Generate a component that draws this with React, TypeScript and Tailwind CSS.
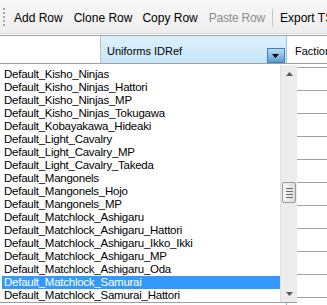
import React from "react";

const items = [
  "Default_Kisho_Ninjas",
  "Default_Kisho_Ninjas_Hattori",
  "Default_Kisho_Ninjas_MP",
  "Default_Kisho_Ninjas_Tokugawa",
  "Default_Kobayakawa_Hideaki",
  "Default_Light_Cavalry",
  "Default_Light_Cavalry_MP",
  "Default_Light_Cavalry_Takeda",
  "Default_Mangonels",
  "Default_Mangonels_Hojo",
  "Default_Mangonels_MP",
  "Default_Matchlock_Ashigaru",
  "Default_Matchlock_Ashigaru_Hattori",
  "Default_Matchlock_Ashigaru_Ikko_Ikki",
  "Default_Matchlock_Ashigaru_MP",
  "Default_Matchlock_Ashigaru_Oda",
  "Default_Matchlock_Samurai",
  "Default_Matchlock_Samurai_Hattori",
];

export default function App() {
  return (
    <div
      className="relative w-[327px] h-[305px] overflow-hidden bg-white text-[12px] text-black"
      style={{ fontFamily: '"Liberation Sans", Arial, sans-serif' }}
    >
      {/* Toolbar */}
      <div className="h-[34px] bg-gradient-to-b from-[#f7f7f7] to-[#eeeeee] border-b border-[#d8d8d8] flex items-center whitespace-nowrap overflow-hidden">
        <div className="ml-[3px] mr-[8px] flex flex-col gap-[2px] shrink-0">
          {[0, 1, 2, 3, 4].map((i) => (
            <div key={i} className="w-[2px] h-[2px] bg-[#a8a8a8]" />
          ))}
        </div>
        <span className="ml-[1px] mt-[2px] shrink-0">Add Row</span>
        <span className="ml-[11px] mt-[2px] shrink-0">Clone Row</span>
        <span className="ml-[10px] mt-[2px] shrink-0">Copy Row</span>
        <span className="ml-[11px] mt-[2px] shrink-0 text-[#8d8d8d] tracking-[-0.2px]">Paste Row</span>
        <div className="ml-[7px] w-px h-[18px] bg-[#c8c8c8] mt-[2px] shrink-0" />
        <span className="ml-[7px] mt-[2px] shrink-0">Export TS</span>
      </div>

      {/* Header row */}
      <div className="mt-[1px] h-[29px] flex border-t border-b border-[#a0a0a0] text-[11px] whitespace-nowrap">
        <div className="w-[101px] shrink-0 bg-white border-r border-[#c0c0c0]" />
        <div className="w-[186px] shrink-0 bg-gradient-to-b from-[#def1fc] to-[#c5e6f8] border-r border-[#9fc6de] relative flex items-center">
          <span className="ml-[6px] mt-[3px]">Uniforms IDRef</span>
          <div className="absolute left-[166px] top-[12px] w-[18px] h-[15px] border border-[#3c7fb1] bg-gradient-to-b from-[#b9dcf3] to-[#5aa0d3] flex items-center justify-center">
            <svg width="8" height="4" viewBox="0 0 8 4">
              <path d="M0 0h7l-3.5 4z" fill="#000" />
            </svg>
          </div>
        </div>
        <div className="flex-1 bg-white flex items-center overflow-hidden">
          <span className="ml-[8px] mt-[3px]">Faction</span>
        </div>
      </div>

      {/* Grid body */}
      <div className="relative">
        <div className="h-[4px] border-b border-[#a0a0a0]" />
        {Array.from({ length: 11 }).map((_, i) => (
          <div key={i} className="h-[23px] border-b border-[#a0a0a0] flex">
            <div className="w-[287px] shrink-0 border-r border-[#a0a0a0]" />
          </div>
        ))}
      </div>

      {/* Dropdown list overlay */}
      <div className="absolute left-0 top-[65px] w-[297px] h-[238px] bg-white border-b border-[#a0a0a0] flex">
        <div className="flex-1 pt-[3px] pl-[2px] overflow-hidden text-[11.5px] tracking-[-0.25px]">
          {items.map((it) => {
            const sel = it === "Default_Matchlock_Samurai";
            return (
              <div
                key={it}
                className={
                  "h-[13px] leading-[13px] pl-[2px] whitespace-nowrap " +
                  (sel ? "bg-[#3399ff] text-white" : "text-[#000]")
                }
              >
                {it}
              </div>
            );
          })}
        </div>
        {/* Scrollbar */}
        <div className="w-[17px] shrink-0 bg-[#ececec] border-l border-[#e0e0e0] flex flex-col items-center">
          <div className="h-[17px] w-full flex items-center justify-center">
            <svg width="7" height="4" viewBox="0 0 7 4">
              <path d="M0 4h7L3.5 0z" fill="#555" />
            </svg>
          </div>
          <div className="h-[100px]" />
          <div className="w-[14px] h-[21px] border border-[#9a9a9a] rounded-[2px] bg-gradient-to-r from-[#f6f6f6] to-[#dcdcdc] flex flex-col items-center justify-center gap-[2px]">
            {[0, 1, 2, 3].map((i) => (
              <div key={i} className="w-[7px] h-px bg-[#6a6a6a]" />
            ))}
          </div>
          <div className="flex-1" />
          <div className="h-[17px] w-full flex items-center justify-center">
            <svg width="7" height="4" viewBox="0 0 7 4">
              <path d="M0 0h7L3.5 4z" fill="#555" />
            </svg>
          </div>
        </div>
      </div>
    </div>
  );
}
